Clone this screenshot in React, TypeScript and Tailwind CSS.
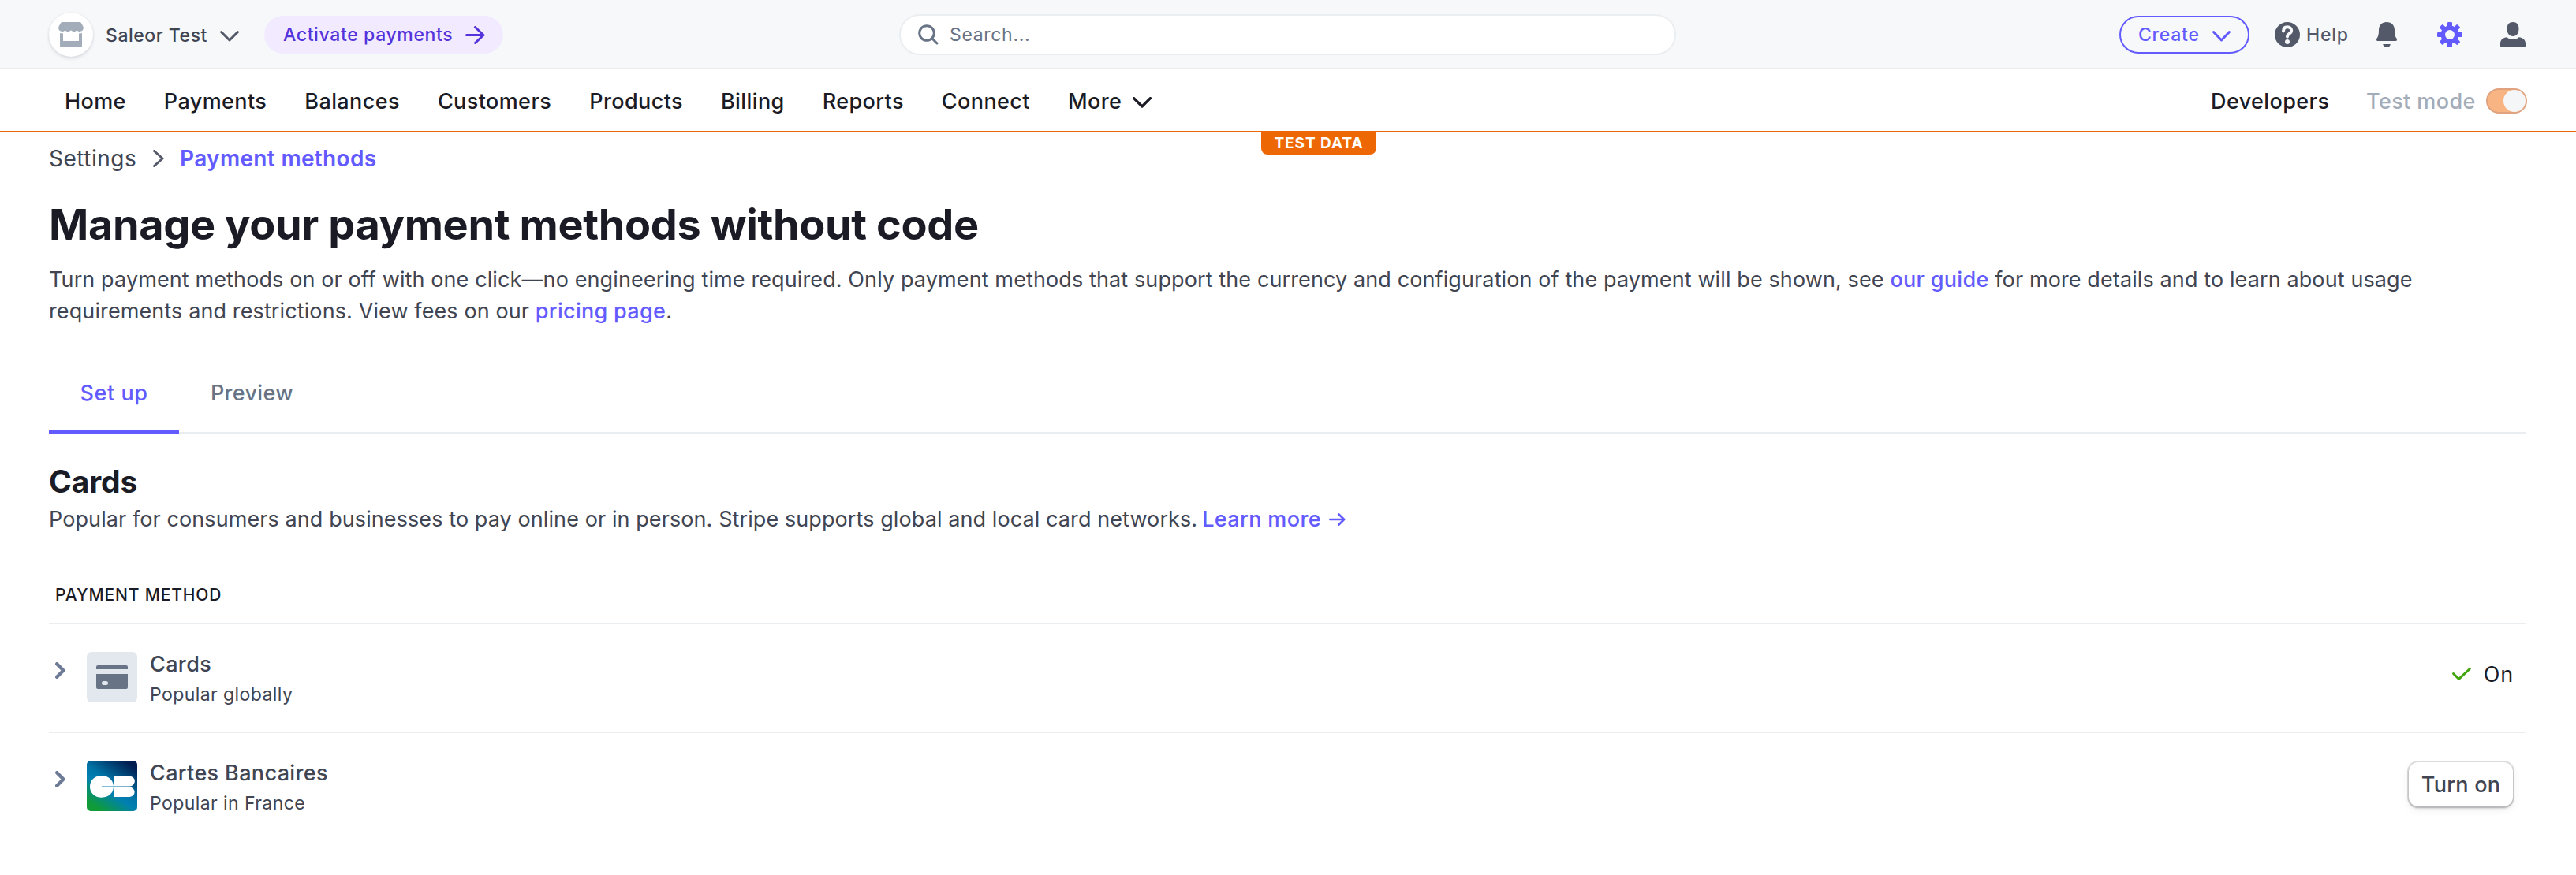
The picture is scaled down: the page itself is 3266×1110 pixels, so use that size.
import type { ReactNode } from 'react';

function ChevronDown({ className, w, h, strokeWidth = 3 }: { className?: string; w: number; h: number; strokeWidth?: number }) {
  return (
    <svg width={w} height={h} viewBox={`0 0 ${w} ${h}`} className={className} fill="none" stroke="currentColor" strokeWidth={strokeWidth} strokeLinecap="round" strokeLinejoin="round">
      <path d={`M1.6 1.6 L${w / 2} ${h - 2} L${w - 1.6} 1.6`} />
    </svg>
  );
}

function ChevronRight({ className, w, h, strokeWidth }: { className?: string; w: number; h: number; strokeWidth: number }) {
  const p = strokeWidth / 2;
  return (
    <svg width={w} height={h} viewBox={`0 0 ${w} ${h}`} className={className} fill="none" stroke="currentColor" strokeWidth={strokeWidth} strokeLinecap="round" strokeLinejoin="round">
      <path d={`M${p} ${p} L${w - p - 0.4} ${h / 2} L${p} ${h - p}`} />
    </svg>
  );
}

function ArrowRight({ className, w, h, strokeWidth }: { className?: string; w: number; h: number; strokeWidth: number }) {
  const p = strokeWidth / 2;
  return (
    <svg width={w} height={h} viewBox={`0 0 ${w} ${h}`} className={className} fill="none" stroke="currentColor" strokeWidth={strokeWidth} strokeLinecap="round" strokeLinejoin="round">
      <path d={`M${p} ${h / 2} H${w - p - 0.5} M${w - h / 2 - p + 0.5} ${p} L${w - p - 0.5} ${h / 2} L${w - h / 2 - p + 0.5} ${h - p}`} />
    </svg>
  );
}

function ShopIcon() {
  return (
    <svg width="32" height="32" viewBox="0 0 32 32" fill="#a3acb9">
      <path d="M5 0 H27 C28 0 28.6 .4 29 1.2 L31.4 5.6 C32.8 9 30.4 12 27 12 C25.6 12 24.4 11.400 23.500 10.500 C22.600 11.400 21.400 12 20 12 C18.300 12 16.900 11.300 16 10.200 C15.100 11.300 13.700 12 12 12 C10.600 12 9.400 11.400 8.500 10.500 C7.600 11.400 6.400 12 5 12 C1.600 12 -.8 9 .6 5.600 L3 1.200 C3.400 .4 4 0 5 0 Z" />
      <path d="M2 14 C3.600 14.600 5 14.600 6 14.200 V24 H26 V14.200 C27 14.600 28.400 14.600 30 14 V30 C30 31.200 29.200 32 28 32 H4 C2.800 32 2 31.200 2 30 Z" />
    </svg>
  );
}

function SearchIcon() {
  return (
    <svg width="26" height="26" viewBox="0 0 26 26" fill="none" stroke="#687385" strokeWidth="3" strokeLinecap="round">
      <circle cx="11" cy="11" r="9.300" />
      <path d="M18 18 L24 24" />
    </svg>
  );
}

function HelpIcon() {
  return (
    <svg width="32" height="32" viewBox="0 0 32 32">
      <circle cx="16" cy="16" r="16" fill="#545969" />
      <path d="M11 11.600 C11 8 13 6.200 16 6.200 C19 6.200 21.200 8 21.200 10.800 C21.200 14.800 16 14.600 16 18.600" fill="none" stroke="#f6f8fa" strokeWidth="4" strokeLinecap="round" />
      <circle cx="16" cy="25" r="3" fill="#f6f8fa" />
    </svg>
  );
}

function BellIcon() {
  return (
    <svg width="32" height="32" viewBox="0 0 32 32" fill="#545969">
      <path d="M16 0 C22 0 26 4 26 10 C26 15 26.600 18.500 28.500 20.800 C29.500 22.400 29 24 27.500 24 H4.500 C3 24 2.500 22.400 3.500 20.800 C5.400 18.500 6 15 6 10 C6 4 10 0 16 0 Z" />
      <path d="M11.200 28 H20.800 C20.300 30.400 18.500 32 16 32 C13.500 32 11.700 30.400 11.200 28 Z" />
    </svg>
  );
}

function GearIcon() {
  return (
    <svg width="32" height="32" viewBox="0 0 32 32" fill="#635bff">
      {[0, 45, 90, 135].map((a) => (
        <rect key={a} x="13" y="0" width="6" height="32" rx="1.200" transform={`rotate(${a} 16 16)`} />
      ))}
      <circle cx="16" cy="16" r="11.500" />
      <circle cx="16" cy="16" r="6" fill="#f6f8fa" />
    </svg>
  );
}

function PersonIcon() {
  return (
    <svg width="32" height="32" viewBox="0 0 32 32" fill="#545969">
      <path d="M16 0 C20.800 0 23.500 3.200 23.500 8.500 C23.500 14 20.800 18 16 18 C11.200 18 8.500 14 8.500 8.500 C8.500 3.200 11.200 0 16 0 Z" />
      <path d="M8.500 19.200 C10.300 20.900 13 22 16 22 C19 22 21.700 20.900 23.500 19.200 C28.500 19.600 32 22.500 32 27 V30 C32 31.200 31.200 32 30 32 H2 C.8 32 0 31.200 0 30 V27 C0 22.500 3.500 19.600 8.500 19.200 Z" />
    </svg>
  );
}

function CardIcon() {
  return (
    <svg width="64" height="64" viewBox="0 0 64 64">
      <rect width="64" height="64" rx="6" fill="#e3e8ee" />
      <path d="M14 17 H50 A2 2 0 0 1 52 19 V22 H12 V19 A2 2 0 0 1 14 17 Z" fill="#687385" />
      <path d="M12 28 H52 V45 A2 2 0 0 1 50 47 H14 A2 2 0 0 1 12 45 Z" fill="#687385" />
      <rect x="19" y="37" width="8" height="5" rx="2.500" fill="#e3e8ee" />
    </svg>
  );
}

function CartesBancairesIcon() {
  return (
    <svg width="64" height="64" viewBox="0 0 64 64">
      <defs>
        <linearGradient id="cb" x1="12" y1="60" x2="52" y2="2" gradientUnits="userSpaceOnUse">
          <stop offset="0" stopColor="#109b38" />
          <stop offset="0.06" stopColor="#0d9848" />
          <stop offset="0.38" stopColor="#0080b1" />
          <stop offset="0.54" stopColor="#0074a6" />
          <stop offset="1" stopColor="#001d50" />
        </linearGradient>
      </defs>
      <rect width="64" height="64" rx="5" fill="url(#cb)" />
      <path d="M19 32.400 H34 C33.600 24.500 27.500 19 19 19 C10 19 4 25 4 33 C4 41 10 46.700 19 46.700 C27.500 46.700 33.600 41.500 34 33.600 H19 Z" fill="#fff" />
      <path d="M35 19.700 H54.500 A6.300 6.300 0 0 1 54.500 32.400 H35 Z M35 33.600 H54.500 A6.100 6.100 0 0 1 54.500 45.900 H35 Z" fill="#fff" />
    </svg>
  );
}

function CheckIcon() {
  return (
    <svg width="26" height="18" viewBox="0 0 26 18" fill="none" stroke="#3fa40d" strokeWidth="3" strokeLinecap="round" strokeLinejoin="round">
      <path d="M2.500 8.500 L9.500 15.300 L23.300 2.500" />
    </svg>
  );
}

const navItems = ['Home', 'Payments', 'Balances', 'Customers', 'Products', 'Billing', 'Reports', 'Connect'];

function TopBar() {
  return (
    <header className="flex h-22 items-center bg-[#f6f8fa] px-[62px] pr-16 text-[23px] font-medium whitespace-nowrap shadow-[inset_0_-2px_0_#ebeef1]">
      <div className="flex w-[1078px] items-center">
        <div className="flex size-14 items-center justify-center rounded-full bg-white shadow-[0_2px_4px_rgba(60,66,87,0.16),0_0_2px_rgba(60,66,87,0.08)]">
          <ShopIcon />
        </div>
        <span className="ml-4 w-[145px] pt-[3px] tracking-[0.53px] text-[#414552]">Saleor Test</span>
        <ChevronDown w={24} h={14} className="mt-1 text-[#545969]" />
        <a className="ml-8 flex h-12 w-[303px] items-center justify-between rounded-full bg-[#f2ebff] pr-[23px] pl-6 text-[#5433db]">
          <span className="pt-px tracking-[0.63px]">Activate payments</span>
          <ArrowRight w={25} h={23} strokeWidth={3} />
        </a>
      </div>
      <div className="flex h-[52px] w-[985px] items-center rounded-full border-2 border-[#ebeef1] bg-white pl-[22px] font-normal text-[#687385]">
        <SearchIcon />
        <span className="ml-[14px] pt-px tracking-[0.68px]">Search...</span>
      </div>
      <div className="flex flex-1 items-center justify-end">
        <button className="flex h-12 w-[165px] items-center justify-between rounded-full border-2 border-[#635bff] px-[22px] text-[#635bff]">
          <span className="pt-px tracking-[0.75px]">Create</span>
          <ChevronDown w={23} h={14} className="mt-1" />
        </button>
        <div className="ml-8 flex w-[126px] items-center gap-2 text-[#545969]">
          <HelpIcon />
          <span className="pt-px tracking-[0.8px]">Help</span>
        </div>
        <div className="flex gap-12">
          <BellIcon />
          <GearIcon />
          <PersonIcon />
        </div>
      </div>
    </header>
  );
}

function NavBar() {
  return (
    <nav className="relative flex h-20 items-center bg-white pr-[62px] pl-[82px] text-[27px] font-medium tracking-[0.4px] whitespace-nowrap text-[#1a1b25] shadow-[inset_0_-2px_0_#ed6704]">
      <div className="flex items-center gap-12 pt-0.5">
        {navItems.map((item) => (
          <a key={item}>{item}</a>
        ))}
        <a className="flex items-center gap-[14px]">
          More
          <ChevronDown w={24} h={14} className="mt-0.5" strokeWidth={3.4} />
        </a>
      </div>
      <div className="ml-auto flex items-center">
        <a className="w-[197px] pt-0.5">Developers</a>
        <span className="w-[152px] pt-0.5 text-[#a3acb9]">Test mode</span>
        <span className="flex h-8 w-[52px] items-center justify-end rounded-full border-2 border-[#e0a27f] bg-[#f8b482]">
          <span className="size-7 rounded-full bg-[#f5f6f8]" />
        </span>
      </div>
      <div className="absolute top-[78px] left-[1599px] flex h-[30px] w-[146px] items-center justify-center rounded-b-lg bg-[#ed6704] pt-[3px] text-[19px] font-bold tracking-[0.97px] text-white">
        TEST DATA
      </div>
    </nav>
  );
}

function MethodRow({ icon, name, note, last, children }: { icon: ReactNode; name: string; note: string; last?: boolean; children: ReactNode }) {
  return (
    <div className={last ? 'flex h-[138px] items-start' : 'flex h-[138px] items-start shadow-[inset_0_-2px_0_#ebeef1]'}>
      <ChevronRight w={13} h={21} strokeWidth={4.400} className="mt-[47.5px] ml-[7.5px] text-[#6c7a96]" />
      <div className="mt-[35px] ml-[27.5px]">{icon}</div>
      <div className="mt-[31px] ml-4 flex-1 text-[#414552]">
        <div className="text-[27px] leading-10 font-medium tracking-[0.36px]">{name}</div>
        <div className="text-[23px] leading-9 tracking-[0.42px]">{note}</div>
      </div>
      {children}
    </div>
  );
}

export default function App() {
  return (
    <div className="h-[1110px] overflow-hidden bg-white font-['Inter',sans-serif]">
      <TopBar />
      <NavBar />
      <main className="mr-16 ml-[62px] text-[27px] text-[#414552]">
        <div className="mt-3 flex h-10 items-center text-[28px] whitespace-nowrap">
          <span className="w-[132px] pt-px tracking-[0.5px]">Settings</span>
          <ChevronRight w={14} h={22} strokeWidth={3} className="mt-0.5 text-[#545969]" />
          <span className="ml-5 pt-px font-semibold tracking-[0.33px] text-[#635bff]">Payment methods</span>
        </div>
        <h1 className="mt-[29px] text-[54px] leading-[72px] font-bold tracking-[-0.37px] text-[#1a1b25]">Manage your payment methods without code</h1>
        <p className="mt-[14px] leading-10 tracking-[0.112px] whitespace-nowrap">
          Turn payment methods on or off with one click—no engineering time required. Only payment methods that support the currency and configuration of the payment will be shown, see{' '}
          <a className="font-medium tracking-[0.3px] text-[#635bff]">our guide</a> for more details and to learn about usage
          <br />
          requirements and restrictions. View fees on our <a className="font-medium tracking-[0.3px] text-[#635bff]">pricing page</a>.
        </p>
        <div className="mt-[31px] flex h-26 font-medium shadow-[inset_0_-2px_0_#ebeef1]">
          <div className="flex w-[165px] items-center justify-center pt-0.5 tracking-[0.6px] text-[#635bff] shadow-[inset_0_-4px_0_#635bff]">Set up</div>
          <div className="flex items-center pt-0.5 pl-10 tracking-[0.3px] text-[#687385]">Preview</div>
        </div>
        <h2 className="mt-[37px] text-[39px] leading-12 font-bold tracking-[-0.13px] text-[#1a1b25]">Cards</h2>
        <div className="mt-1 flex h-10 items-center whitespace-nowrap">
          <span className="tracking-[0.09px]">Popular for consumers and businesses to pay online or in person. Stripe supports global and local card networks.</span>
          <a className="ml-[6px] flex items-center gap-[10px] font-medium tracking-[0.37px] text-[#635bff]">
            Learn more
            <ArrowRight w={21} h={16} strokeWidth={2.600} />
          </a>
        </div>
        <div className="mt-[39px] flex h-[74px] items-center pl-2 text-[21px] font-medium tracking-[0.86px] text-[#1a1b25] shadow-[inset_0_-2px_0_#ebeef1]">PAYMENT METHOD</div>
        <MethodRow icon={<CardIcon />} name="Cards" note="Popular globally">
          <div className="mt-[43px] mr-[15px] flex h-10 items-center gap-[15px] tracking-[0.8px] text-[#1a1b25]">
            <CheckIcon />
            <span className="pt-0.5">On</span>
          </div>
        </MethodRow>
        <MethodRow icon={<CartesBancairesIcon />} name="Cartes Bancaires" note="Popular in France" last>
          <button className="mt-[37px] mr-4 flex h-14 w-[132px] items-center justify-center rounded-xl bg-white pt-0.5 font-medium tracking-[0.26px] text-[#414552] shadow-[0_0_0_2px_rgba(60,60,70,0.16),0_2px_2px_1px_rgba(0,0,0,0.12),0_4px_10px_rgba(60,66,87,0.1)]">Turn on</button>
        </MethodRow>
      </main>
    </div>
  );
}
